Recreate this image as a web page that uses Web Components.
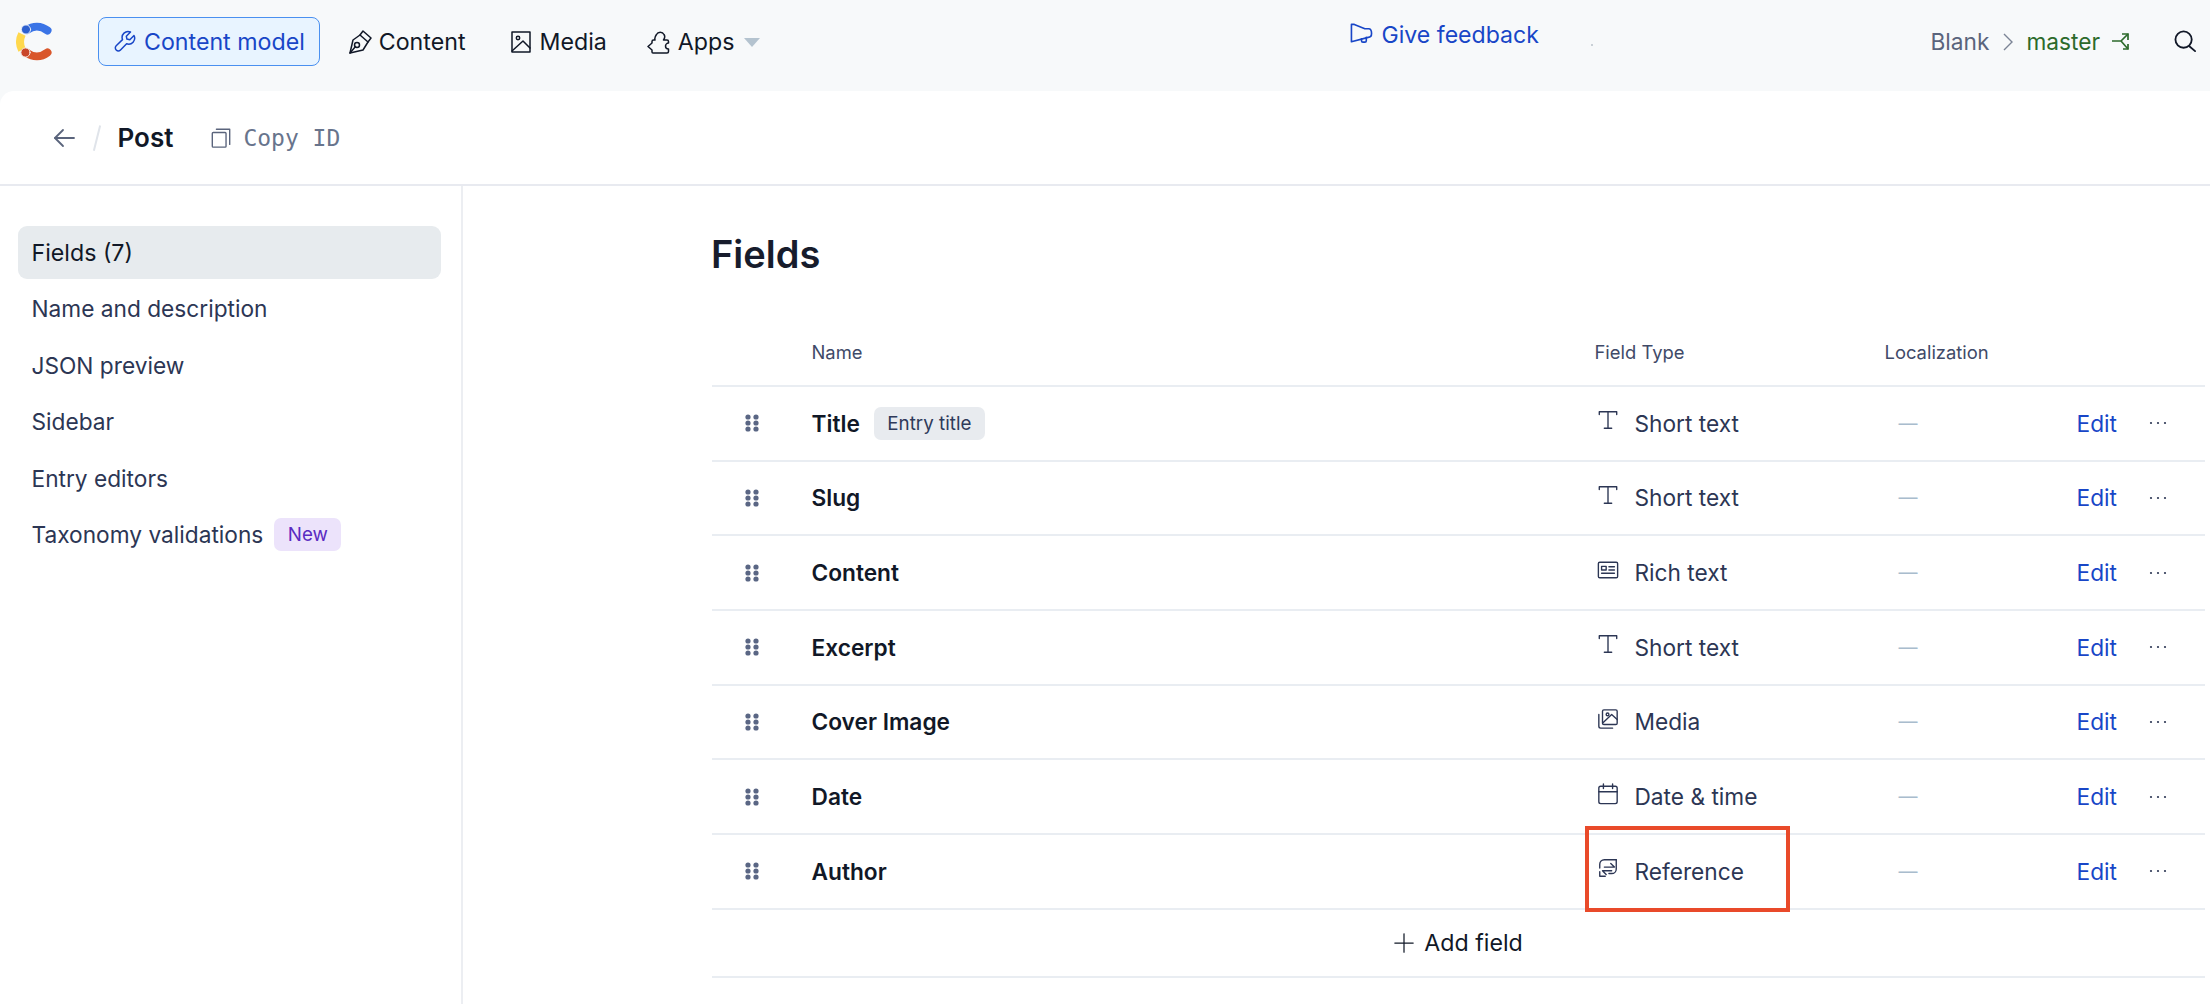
<!DOCTYPE html>
<html lang="en">
<head>
<meta charset="utf-8">
<title>Post - Content model</title>
<style>
  html, body { margin: 0; height: 100%; overflow: hidden; }
  body { background: #f7f9fa; font-family: Inter, "Liberation Sans", sans-serif; position: relative; }
</style>
</head>
<body>
<app-topbar>
  <nav-item icon="wrench" active>Content model</nav-item>
  <nav-item icon="pen">Content</nav-item>
  <nav-item icon="image">Media</nav-item>
  <nav-item icon="puzzle" caret style="margin-left:-3px">Apps</nav-item>
</app-topbar>
<page-card>
  <page-header title-text="Post"></page-header>
  <side-nav slot="side">
    <side-item active>Fields (7)</side-item>
    <side-item>Name and description</side-item>
    <side-item>JSON preview</side-item>
    <side-item>Sidebar</side-item>
    <side-item>Entry editors</side-item>
    <side-item>Taxonomy validations<small-badge tone="purple">New</small-badge></side-item>
  </side-nav>
  <fields-table>
    <field-row name="Title" type="Short text" icon="text"><small-badge>Entry title</small-badge></field-row>
    <field-row name="Slug" type="Short text" icon="text"></field-row>
    <field-row name="Content" type="Rich text" icon="rich"></field-row>
    <field-row name="Excerpt" type="Short text" icon="text"></field-row>
    <field-row name="Cover Image" type="Media" icon="media"></field-row>
    <field-row name="Date" type="Date &amp; time" icon="date"></field-row>
    <field-row name="Author" type="Reference" icon="reference"></field-row>
  </fields-table>
</page-card>
<red-mark></red-mark>

<script>
const ICONS = {
  wrench: '<path d="M21 5.500l-4.200 4.200-2.900-.6-.6-2.900L17.500 2a6 6 0 0 0-8 7.600L3.200 15.700a3 3 0 0 0 4.300 4.300l6.100-6.200A6 6 0 0 0 21 5.500z"/>',
  pen: '<path d="M2 23L5 10 12 5 15 1 23 8 20 12 15 20z"/><path d="M12 5l8 7"/><circle cx="9" cy="15" r="2.500"/><path d="M2 23l5.500-6.500"/>',
  image: '<rect x="3" y="2" width="18" height="20"/><circle cx="9" cy="8" r="1.700"/><path d="M3 21l11-10 7 7"/>',
  puzzle: '<path d="M8 10H6.500A1.500 1.500 0 0 0 5 11.500V13L1 16.500 5 20V22A1 1 0 0 0 6 23H20A1.500 1.500 0 0 0 21.500 21.500V19C19 19 18.500 17.500 18.500 16S20 13 21.500 13V11.500A1.500 1.500 0 0 0 20 10H16.500C18 8 18 6 17 4.500 15.500 1.500 11 1.500 9.500 4.500 8 6.500 7.500 8.500 8 10Z"/>',
  megaphone: '<path d="M1.500 1.500H4.500L15.500 6H19.500C21.500 6 22.500 8.500 22.500 11S21 15 19 15L1.500 19.500Z"/><path d="M12 16.500V18.500a1.500 1.500 0 0 0 1.500 1.500h2a1.500 1.500 0 0 0 1.500-1.500v-3.500"/>',
  search: '<circle cx="10" cy="10" r="8.500"/><path d="M16 17l6 5"/>',
  copy: '<rect x="2.500" y="6" width="15" height="16" rx="1"/><path d="M7 2.500h14.500V19"/>',
  back: '<path d="M22 12H3"/><path d="M11 4l-8 8 8 8"/>',
  plus: '<path d="M12 1v22"/><path d="M1 12h22"/>',
  text: '<path d="M2.500 6V3h19v3"/><path d="M12 3v18"/><path d="M8 21h8"/>',
  rich: '<rect x="1.500" y="3.500" width="21" height="17" rx="1.500"/><rect x="5" y="8" width="5" height="4"/><path d="M13 8.500h6M13 12h6M5 15.500h14"/>',
  media: '<rect x="6" y="2" width="16" height="16" rx="1.500"/><path d="M2 7v13a2 2 0 0 0 2 2h13"/><circle cx="11.500" cy="7" r="1.500"/><path d="M6.500 16l9.500-9 6 5.500"/>',
  date: '<rect x="2" y="3.500" width="20" height="19" rx="2"/><path d="M2 9.500h20M7 1v5M17 1v5"/>',
  reference: '<path d="M21 3H8A5 5 0 0 0 3 8V12"/><path d="M21 3V13a5 5 0 0 1-5 5H13"/><path d="M3 16V21H9"/><path d="M8 11H19L15 7"/><path d="M16 15H6L10 19"/>'
};

function icon(name, size, width) {
  return `<svg width="${size}" height="${size}" viewBox="0 0 24 24" fill="none" stroke="currentColor" stroke-width="${width}" stroke-linecap="round" stroke-linejoin="round">${ICONS[name]}</svg>`;
}

class AppTopbar extends HTMLElement {
  constructor() {
    super();
    this.attachShadow({ mode: 'open' });
  }
  connectedCallback() {
    this.shadowRoot.innerHTML = `
      <style>
        :host { display: flex; align-items: center; height: 91px; padding: 0 13px 8px 16px; box-sizing: border-box; background: #f7f9fa; }
        svg { display: block; flex: none; }
        .logo { margin-right: 44px; }
        nav { display: flex; align-items: center; gap: 13px; }
        .feedback { display: flex; align-items: center; gap: 8px; margin-left: 575px; margin-bottom: 14px; color: #1846c7; font-size: 23.100px; font-weight: 420; }
        .speck { width: 2px; height: 2px; background: #c9d0d6; margin: 6px 0 0 52px; }
        .right { margin-left: auto; display: flex; align-items: center; font-size: 22.700px; color: #5a647c; }
        .chev { margin: 0 13px 0 14px; color: #7b8496; }
        .master { color: #2c6a2b; margin-right: 12px; }
        .branch { color: #2c6a2b; }
        .search { margin-left: 44px; color: #111827; }
      </style>
      <svg class="logo" width="38" height="42" viewBox="16 21 38 42" fill="none" stroke-linecap="round">
        <path d="M22 34c-2.500 5-2.500 11 0 16" stroke="#ffd84d" stroke-width="8" stroke-linecap="butt"/>
        <path d="M27 30c6-4.500 14-4.500 20.500 .5" stroke="#3a74e6" stroke-width="8"/>
        <path d="M27 53c6 4.500 14 4.500 20.500-.5" stroke="#d9572b" stroke-width="8"/>
        <circle cx="26" cy="29.500" r="4.600" fill="#2d60cf" stroke="#e8eef7" stroke-width="1"/>
        <circle cx="25.500" cy="52.500" r="4.600" fill="#c9462a" stroke="#f4e9e4" stroke-width="1"/>
      </svg>
      <nav><slot></slot></nav>
      <div class="feedback">${icon('megaphone', 23, 1.700)}<span>Give feedback</span></div>
      <span class="speck"></span>
      <div class="right">
        <span>Blank</span>
        <svg class="chev" width="10" height="18" viewBox="0 0 10 18" fill="none" stroke="currentColor" stroke-width="1.400"><path d="M1 1l8 8-8 8"/></svg>
        <span class="master">master</span>
        <svg class="branch" width="18" height="18" viewBox="0 0 18 18" fill="none" stroke="currentColor" stroke-width="1.700"><path d="M0 8H9L16 1"/><path d="M10 1H16V7"/><path d="M9 8L16 16"/><path d="M11 16H16V11"/></svg>
        <span class="search">${icon('search', 23, 1.900)}</span>
      </div>`;
  }
}

class NavItem extends HTMLElement {
  constructor() {
    super();
    this.attachShadow({ mode: 'open' });
  }
  connectedCallback() {
    const name = this.getAttribute('icon');
    this.shadowRoot.innerHTML = `
      <style>
        :host { display: flex; align-items: center; gap: 7px; height: 49px; padding: 0 14px; box-sizing: border-box; border-radius: 8px; border: 1.500px solid transparent; color: #111827; font-size: 23.200px; font-weight: 420; white-space: nowrap; }
        :host([active]) { background: #e8f4ff; border-color: #4a90f0; color: #1846c7; }
        svg { display: block; flex: none; }
        .caret { width: 0; height: 0; border-left: 8.500px solid transparent; border-right: 8.500px solid transparent; border-top: 9px solid #b4c3cf; margin: 2px 0 0 3px; }
      </style>
      ${icon(name, 24, 1.500)}<span><slot></slot></span>${this.hasAttribute('caret') ? '<i class="caret"></i>' : ''}`;
  }
}

class PageCard extends HTMLElement {
  constructor() {
    super();
    this.attachShadow({ mode: 'open' });
    this.shadowRoot.innerHTML = `
      <style>
        :host { display: block; height: 913px; background: #fff; border-radius: 14px 0 0 0; overflow: hidden; }
        .columns { display: grid; grid-template-columns: 463px 1fr; height: 820px; }
      </style>
      <slot></slot>
      <div class="columns"><slot name="side"></slot><slot name="main"></slot></div>`;
  }
  connectedCallback() {
    const table = this.querySelector('fields-table');
    if (table) table.slot = 'main';
  }
}

class PageHeader extends HTMLElement {
  constructor() {
    super();
    this.attachShadow({ mode: 'open' });
  }
  connectedCallback() {
    this.shadowRoot.innerHTML = `
      <style>
        :host { display: flex; align-items: center; height: 95px; padding-left: 52px; box-sizing: border-box; border-bottom: 2px solid #e8eaf0; }
        svg { display: block; flex: none; }
        .back { color: #5a647c; }
        .slash { width: 1.500px; height: 26px; background: #e0e4ea; transform: rotate(14deg); margin: 0 20px 0 20px; }
        h1 { margin: 0 37px 0 0; font-size: 26px; font-weight: 600; color: #111827; }
        .copy { color: #5a647c; margin-right: 11px; }
        .id { font-family: "DejaVu Sans Mono", "Liberation Mono", monospace; font-size: 23px; color: #68748c; white-space: nowrap; }
      </style>
      <span class="back">${icon('back', 24, 1.800)}</span>
      <span class="slash"></span>
      <h1>${this.getAttribute('title-text')}</h1>
      <span class="copy">${icon('copy', 22, 1.500)}</span>
      <span class="id">Copy ID</span>`;
  }
}

class SideNav extends HTMLElement {
  constructor() {
    super();
    this.attachShadow({ mode: 'open' });
    this.shadowRoot.innerHTML = `
      <style>
        :host { display: flex; flex-direction: column; gap: 3.400px; padding: 40px 20px 0 18px; border-right: 2px solid #eceef2; box-sizing: border-box; }
      </style>
      <slot></slot>`;
  }
}

class SideItem extends HTMLElement {
  constructor() {
    super();
    this.attachShadow({ mode: 'open' });
    this.shadowRoot.innerHTML = `
      <style>
        :host { display: flex; align-items: center; gap: 11px; height: 53px; padding: 0 13.500px; border-radius: 9px; color: #2c3654; font-size: 22.700px; white-space: nowrap; }
        :host([active]) { background: #e7ebee; color: #111827; font-size: 23.200px; font-weight: 420; }
      </style>
      <slot></slot>`;
  }
}

class SmallBadge extends HTMLElement {
  constructor() {
    super();
    this.attachShadow({ mode: 'open' });
    this.shadowRoot.innerHTML = `
      <style>
        :host { display: inline-flex; align-items: center; height: 33px; padding: 0 13.500px; border-radius: 7px; background: #e8ebef; color: #2f3a5a; font-size: 18.800px; font-weight: 400; white-space: nowrap; }
        :host([tone="purple"]) { background: #ece3fb; color: #5a2bc2; }
      </style>
      <slot></slot>`;
  }
}

class FieldsTable extends HTMLElement {
  constructor() {
    super();
    this.attachShadow({ mode: 'open' });
    this.shadowRoot.innerHTML = `
      <style>
        :host { display: block; padding: 44px 5px 0 249px; }
        h2 { margin: 0 0 41px -1px; font-size: 38px; line-height: 48px; font-weight: 600; color: #171c2c; }
        .head { display: grid; grid-template-columns: 99.500px 783px 290px 1fr; align-items: center; height: 68px; border-bottom: 2px solid #e9edf2; box-sizing: border-box; font-size: 18.400px; color: #3f4a68; }
        .add { display: flex; align-items: center; justify-content: center; gap: 10px; height: 68px; border-bottom: 2px solid #e9edf2; box-sizing: border-box; font-size: 23.200px; font-weight: 420; color: #111827; }
        svg { display: block; flex: none; }
      </style>
      <h2>Fields</h2>
      <div class="head"><span></span><span>Name</span><span>Field Type</span><span>Localization</span></div>
      <slot></slot>
      <div class="add">${icon('plus', 20, 1.500)}<span>Add field</span></div>`;
  }
}

class FieldRow extends HTMLElement {
  constructor() {
    super();
    this.attachShadow({ mode: 'open' });
  }
  connectedCallback() {
    const dots = [3, 9, 15].map(y => `<circle cx="3" cy="${y}" r="2.600"/><circle cx="11" cy="${y}" r="2.600"/>`).join('');
    this.shadowRoot.innerHTML = `
      <style>
        :host { display: grid; grid-template-columns: 99.500px 783px 290px 1fr; align-items: center; height: 74.670px; border-bottom: 2px solid #e9edf2; box-sizing: border-box; font-size: 22.700px; color: #2c3654; }
        svg { display: block; flex: none; }
        .drag { padding-left: 33px; color: #5a6684; }
        .name { display: flex; align-items: center; gap: 14px; }
        b { font-weight: 600; color: #111827; }
        .type { display: flex; align-items: center; gap: 16px; padding-left: 2px; }
        .type span:first-child { margin-top: -6px; color: #2c3654; }
        .rest { display: flex; align-items: center; padding-left: 14px; }
        .dash { color: #a9bccd; font-size: 19px; width: 178px; }
        .edit { color: #1846c7; }
        .more { margin-left: 32px; color: #2c3654; }
      </style>
      <div class="drag"><svg width="14" height="18" viewBox="0 0 14 18" fill="currentColor">${dots}</svg></div>
      <div class="name"><b>${this.getAttribute('name')}</b><slot></slot></div>
      <div class="type"><span>${icon(this.getAttribute('icon'), 22, 1.500)}</span><span>${this.getAttribute('type')}</span></div>
      <div class="rest">
        <span class="dash">—</span>
        <span class="edit">Edit</span>
        <svg class="more" width="18" height="4" viewBox="0 0 18 4" fill="currentColor"><circle cx="2" cy="2" r="1.100"/><circle cx="9" cy="2" r="1.100"/><circle cx="16" cy="2" r="1.100"/></svg>
      </div>`;
  }
}

// the red annotation lies over the table
class RedMark extends HTMLElement {
  constructor() {
    super();
    this.attachShadow({ mode: 'open' });
    this.shadowRoot.innerHTML = `
      <style>
        :host { position: absolute; left: 1585px; top: 826px; width: 205px; height: 86px; box-sizing: border-box; border: 4px solid #e94a2a; }
      </style>`;
  }
}

customElements.define('app-topbar', AppTopbar);
customElements.define('nav-item', NavItem);
customElements.define('page-card', PageCard);
customElements.define('page-header', PageHeader);
customElements.define('side-nav', SideNav);
customElements.define('side-item', SideItem);
customElements.define('small-badge', SmallBadge);
customElements.define('fields-table', FieldsTable);
customElements.define('field-row', FieldRow);
customElements.define('red-mark', RedMark);
</script>
</body>
</html>
